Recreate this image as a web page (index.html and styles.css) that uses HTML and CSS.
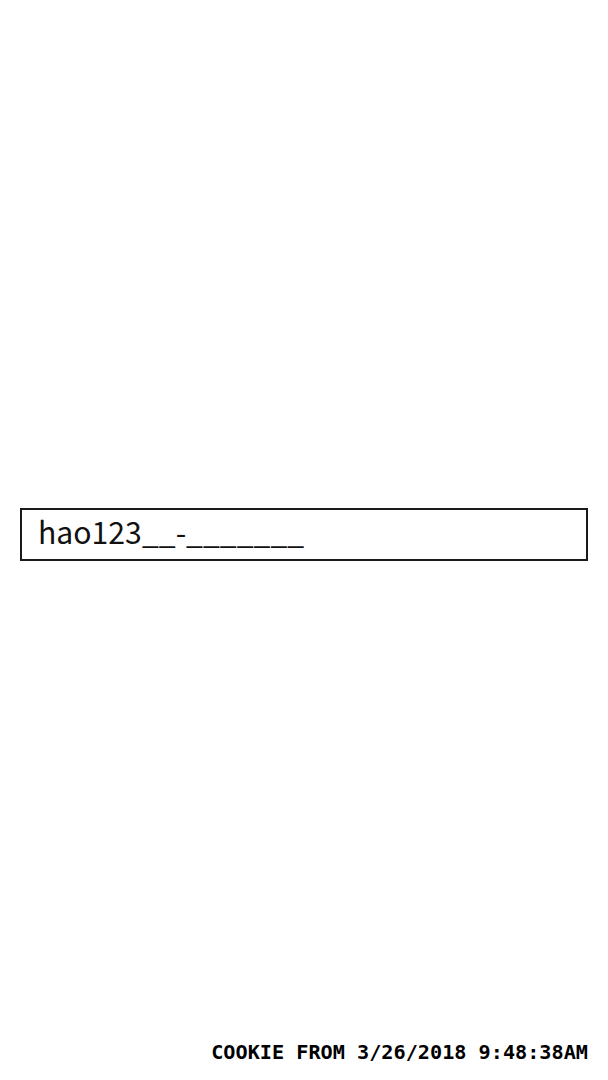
FILE: index.html
```html
<!DOCTYPE html>
<html lang="en">
    <head>
        <meta charset="utf-8">
        <title>cookie</title>
        <meta name="viewport" content="width=device-width, initial-scale=1.0">
        <link rel="stylesheet" href="styles.css">
    </head>

    <body>
        <div class="page">
            <div class="main">
                <input class="name-box" type="text" value="hao123__-_______">
            </div>
            <div class="footer">COOKIE FROM 3/26/2018 9:48:38AM</div>
        </div>
    </body>
</html>
```

FILE: styles.css
```css
html, body {
    margin: 0;
    padding: 0;
    height: 100%;
    background: #fff;
}
.page {
    height: 100%;
    display: flex;
    flex-direction: column;
}
.main {
    flex: 1;
    display: flex;
    align-items: center;
    padding: 28px 20px 0;
}
.name-box {
    box-sizing: border-box;
    width: 100%;
    height: 53px;
    margin: 0;
    padding: 0 17px 6px 16px;
    border: 2px solid #1a1a1a;
    border-radius: 0;
    font-family: "Noto Sans CJK SC", sans-serif;
    font-size: 30.2px;
    color: #111;
    outline: none;
}
.footer {
    text-align: right;
    padding: 0 20px 16px;
    font-family: "DejaVu Sans Mono", monospace;
    font-weight: bold;
    font-size: 20.2px;
    line-height: 24px;
    color: #000;
}
```
